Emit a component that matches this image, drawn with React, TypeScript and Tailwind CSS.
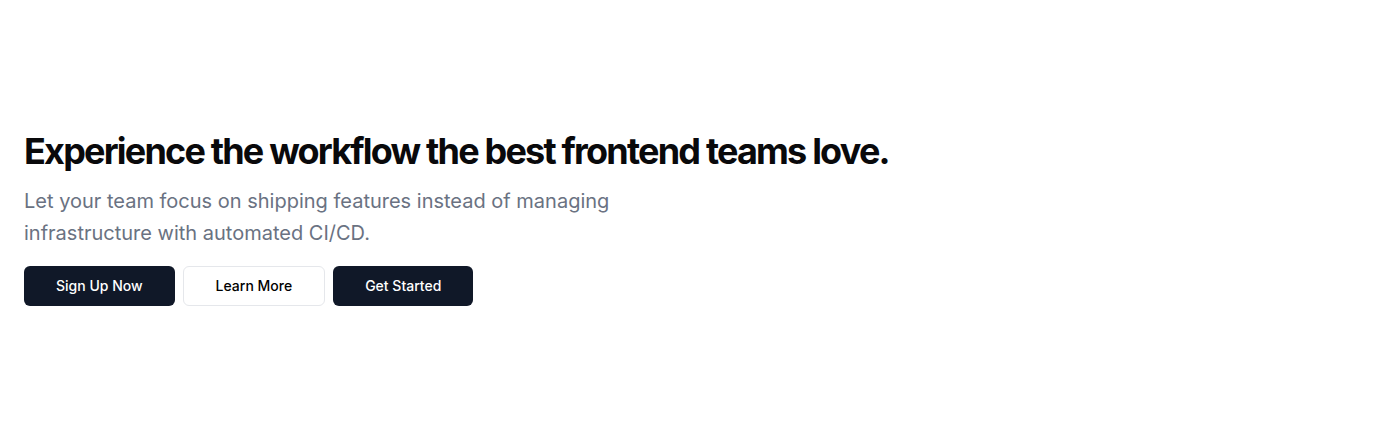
import React from "react";

const App: React.FC = () => (
  <div className="flex h-screen w-full flex-col justify-center bg-white px-6">
    <div className="flex flex-col" style={{ fontFamily: "Inter, sans-serif" }}>
      <h1 className="text-4xl leading-11 font-bold tracking-tighter text-[#09090b]">
        Experience the workflow the best frontend teams love.
      </h1>
      <p className="mt-3 max-w-2xl text-xl leading-relaxed text-gray-500">
        Let your team focus on shipping features instead of managing
        infrastructure with automated CI/CD.
      </p>
      <div className="mt-4 flex gap-2">
        <button className="h-10 rounded-md bg-gray-900 px-8 text-sm font-medium text-white">
          Sign Up Now
        </button>
        <button className="h-10 rounded-md border border-gray-200 bg-white px-8 text-sm font-medium text-black">
          Learn More
        </button>
        <button className="h-10 rounded-md bg-gray-900 px-8 text-sm font-medium text-white">
          Get Started
        </button>
      </div>
    </div>
  </div>
);

export default App;
